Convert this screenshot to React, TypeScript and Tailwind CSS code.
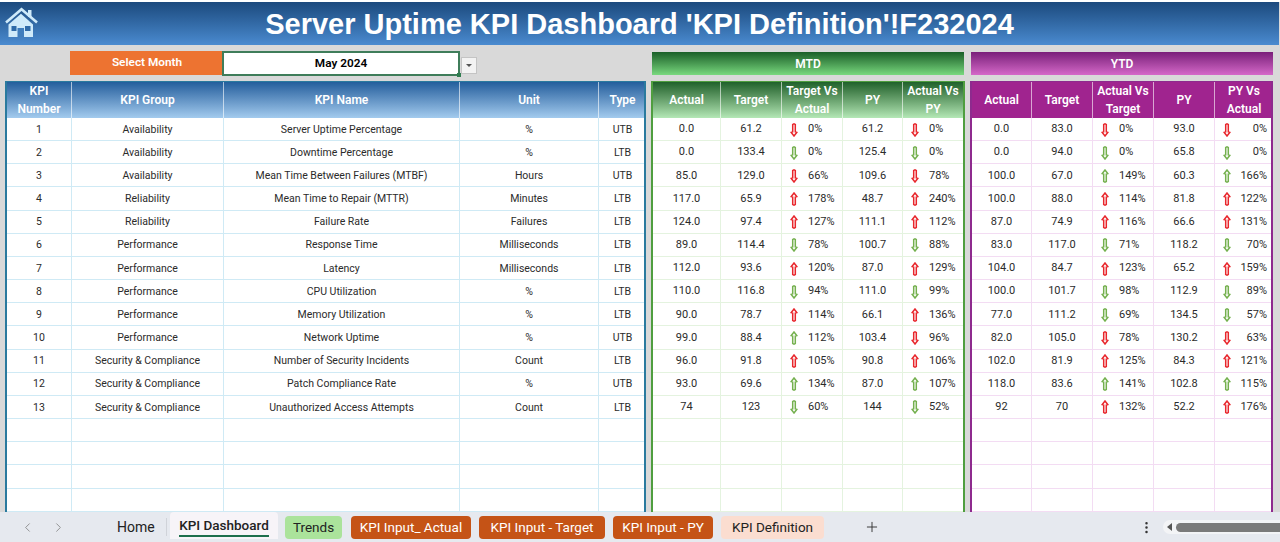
import { Plus, ChevronLeft, ChevronRight, EllipsisVertical } from "lucide-react";

type Arrow = "rd" | "gd" | "ru" | "gu";
type Row = {
  no: string;
  group: string;
  name: string;
  unit: string;
  type: string;
  mtd: string[];
  mtdArrows: [Arrow, Arrow];
  ytd: string[];
  ytdArrows: [Arrow, Arrow];
};

const rows: Row[] = [
  { no: "1", group: "Availability", name: "Server Uptime Percentage", unit: "%", type: "UTB", mtd: ["0.0", "61.2", "0%", "61.2", "0%"], mtdArrows: ["rd", "rd"], ytd: ["0.0", "83.0", "0%", "93.0", "0%"], ytdArrows: ["rd", "rd"] },
  { no: "2", group: "Availability", name: "Downtime Percentage", unit: "%", type: "LTB", mtd: ["0.0", "133.4", "0%", "125.4", "0%"], mtdArrows: ["gd", "gd"], ytd: ["0.0", "94.0", "0%", "65.8", "0%"], ytdArrows: ["gd", "gd"] },
  { no: "3", group: "Availability", name: "Mean Time Between Failures (MTBF)", unit: "Hours", type: "UTB", mtd: ["85.0", "129.0", "66%", "109.6", "78%"], mtdArrows: ["rd", "rd"], ytd: ["100.0", "67.0", "149%", "60.3", "166%"], ytdArrows: ["gu", "gu"] },
  { no: "4", group: "Reliability", name: "Mean Time to Repair (MTTR)", unit: "Minutes", type: "LTB", mtd: ["117.0", "65.9", "178%", "48.7", "240%"], mtdArrows: ["ru", "ru"], ytd: ["100.0", "88.0", "114%", "81.8", "122%"], ytdArrows: ["ru", "ru"] },
  { no: "5", group: "Reliability", name: "Failure Rate", unit: "Failures", type: "LTB", mtd: ["124.0", "97.4", "127%", "111.1", "112%"], mtdArrows: ["ru", "ru"], ytd: ["87.0", "74.9", "116%", "66.6", "131%"], ytdArrows: ["ru", "ru"] },
  { no: "6", group: "Performance", name: "Response Time", unit: "Milliseconds", type: "LTB", mtd: ["89.0", "114.4", "78%", "100.7", "88%"], mtdArrows: ["gd", "gd"], ytd: ["83.0", "117.0", "71%", "118.2", "70%"], ytdArrows: ["gd", "gd"] },
  { no: "7", group: "Performance", name: "Latency", unit: "Milliseconds", type: "LTB", mtd: ["112.0", "93.6", "120%", "87.0", "129%"], mtdArrows: ["ru", "ru"], ytd: ["104.0", "84.7", "123%", "65.2", "159%"], ytdArrows: ["ru", "ru"] },
  { no: "8", group: "Performance", name: "CPU Utilization", unit: "%", type: "LTB", mtd: ["110.0", "116.8", "94%", "111.0", "99%"], mtdArrows: ["gd", "gd"], ytd: ["100.0", "101.7", "98%", "112.9", "89%"], ytdArrows: ["gd", "gd"] },
  { no: "9", group: "Performance", name: "Memory Utilization", unit: "%", type: "LTB", mtd: ["90.0", "78.7", "114%", "66.1", "136%"], mtdArrows: ["ru", "ru"], ytd: ["77.0", "111.2", "69%", "134.5", "57%"], ytdArrows: ["gd", "gd"] },
  { no: "10", group: "Performance", name: "Network Uptime", unit: "%", type: "UTB", mtd: ["99.0", "88.4", "112%", "103.4", "96%"], mtdArrows: ["gu", "rd"], ytd: ["82.0", "105.0", "78%", "130.2", "63%"], ytdArrows: ["rd", "rd"] },
  { no: "11", group: "Security & Compliance", name: "Number of Security Incidents", unit: "Count", type: "LTB", mtd: ["96.0", "91.8", "105%", "90.8", "106%"], mtdArrows: ["ru", "ru"], ytd: ["102.0", "81.9", "125%", "84.3", "121%"], ytdArrows: ["ru", "ru"] },
  { no: "12", group: "Security & Compliance", name: "Patch Compliance Rate", unit: "%", type: "UTB", mtd: ["93.0", "69.6", "134%", "87.0", "107%"], mtdArrows: ["gu", "gu"], ytd: ["118.0", "83.6", "141%", "102.8", "115%"], ytdArrows: ["gu", "gu"] },
  { no: "13", group: "Security & Compliance", name: "Unauthorized Access Attempts", unit: "Count", type: "LTB", mtd: ["74", "123", "60%", "144", "52%"], mtdArrows: ["gd", "gd"], ytd: ["92", "70", "132%", "52.2", "176%"], ytdArrows: ["ru", "ru"] },
];

// padded to the rows that are visible above the sheet tabs
const emptyRows = [0, 1, 2, 3, 4];

function HollowArrow({ kind }: { kind: Arrow }) {
  const color = kind[0] === "r" ? "#e8262c" : "#74b04e";
  const up = kind[1] === "u";
  return (
    <svg width="8" height="14" viewBox="0 0 8 14" className="shrink-0">
      <g transform={up ? "rotate(180 4 7)" : undefined} fill="none" stroke={color} strokeWidth="1.5">
        <path d="M2.700 1v8.500M5.300 1v8.500M2.700 1h2.600M.7 8.700 4 13l3.300-4.300" />
      </g>
    </svg>
  );
}

function HomeIcon() {
  return (
    <svg width="36" height="32" viewBox="0 0 36 32" className="ml-[4px] mt-[5px] shrink-0">
      <path d="M2 15.500 17.500 2.300 33 15.500" fill="none" stroke="#cfeafa" strokeWidth="2.600" />
      <rect x="24" y="3" width="3.500" height="7" fill="#cfeafa" />
      <path d="M4.500 17.500 17 6.800 29 17.500V30H4.500z" fill="#cfeafa" />
      <rect x="7.500" y="19" width="5" height="5" fill="#2f6aa8" />
      <rect x="21" y="19" width="5.500" height="5" fill="#2f6aa8" />
      <rect x="13.500" y="21" width="6.500" height="9" fill="#3f7dbd" />
    </svg>
  );
}

function Dropdown() {
  return (
    <div className="w-[16px] h-[17px] ml-[1px] mt-[6px] bg-[#f3f3f3] border border-[#c4c4c4] flex items-center justify-center">
      <div className="w-0 h-0 border-x-[3px] border-x-transparent border-t-[3px] border-t-[#555]" />
    </div>
  );
}

function Cell({ w, children, line }: { w: string; children?: React.ReactNode; line: string }) {
  return <div className={`${w} ${line} shrink-0 flex items-center justify-center pt-[1px] border-r last:border-r-0`}>{children}</div>;
}

function PctCell({ kind, value, w, line, right }: { kind: Arrow; value: string; w: string; line: string; right?: boolean }) {
  return (
    <div className={`${w} ${line} shrink-0 flex items-center pt-[1px] border-r last:border-r-0 pl-[8px] ${right ? "justify-between pr-[6px]" : "gap-[10px]"}`}>
      <HollowArrow kind={kind} />
      <span>{value}</span>
    </div>
  );
}

const kpiWidths = ["w-[65px]", "w-[152px]", "w-[236px]", "w-[139px]", "w-[47px]"];
const mtdWidths = ["w-[68px]", "w-[61px]", "w-[61px]", "w-[60px]", "w-[60px]"];
const ytdWidths = ["w-[60px]", "w-[61px]", "w-[61px]", "w-[61px]", "w-[58px]"];

function HeaderRow({ labels, widths, className }: { labels: string[]; widths: string[]; className: string }) {
  return (
    <div className={`flex h-[37px] shrink-0 -mt-px text-white font-semibold text-[12px] leading-[18px] ${className}`}>
      {labels.map((label, i) => (
        <div key={label + i} className={`${widths[i]} shrink-0 flex items-center justify-center text-center border-r border-white/60 last:border-r-0 whitespace-pre-line`}>
          {label}
        </div>
      ))}
    </div>
  );
}

export default function App() {
  return (
    <div className="relative w-[1280px] h-[542px] overflow-hidden bg-[#d9d9d9] text-[#2b2b2b] text-[11px] font-['Roboto','Noto_Sans',sans-serif]">
      <div className="h-[2px] bg-white" />
      {/* title bar */}
      <div className="flex h-[43px] mr-[1px] bg-gradient-to-b from-[#1c4a7e] to-[#4a8bd0]">
        <HomeIcon />
        <div className="flex-1 text-center text-white font-bold text-[29px] leading-[44px] font-['Liberation_Sans',sans-serif] pr-[40px]">
          Server Uptime KPI Dashboard 'KPI Definition'!F232024
        </div>
      </div>

      {/* selector row */}
      <div className="flex h-[36px] pt-[6px]">
        <div className="ml-[70px] w-[152px] h-[24px] pl-[2px] bg-[#ed7331] text-white font-semibold text-[11.8px] flex items-center justify-center">
          Select Month
        </div>
        <div className="relative w-[238px] h-[25px] bg-white border-2 border-[#3f7d5a] text-black font-semibold text-[11.8px] flex items-center justify-center">
          May 2024
          <div className="absolute -right-[3px] -bottom-[3px] w-[4px] h-[4px] bg-[#2f7d4f]" />
        </div>
        <Dropdown />
        <div className="ml-[175px] w-[312px] h-[23px] mt-[1px] bg-gradient-to-b from-[#1a6029] to-[#79d97f] text-white font-semibold text-[12px] flex items-center justify-center">
          MTD
        </div>
        <div className="ml-[7px] w-[302px] h-[23px] mt-[1px] bg-gradient-to-b from-[#7a1f7a] to-[#d568c8] text-white font-semibold text-[12px] flex items-center justify-center">
          YTD
        </div>
      </div>

      {/* tables */}
      <div className="flex h-[431px] ml-[5px] gap-[5px]">
        <div className="w-[641px] h-full flex flex-col bg-white border-x-2 border-t border-[#2a7a9e] overflow-hidden shrink-0 text-[10.5px]">
          <HeaderRow
            labels={["KPI\nNumber", "KPI Group", "KPI Name", "Unit", "Type"]}
            widths={kpiWidths}
            className="bg-gradient-to-b from-[#1f5c9a] to-[#a3cbee]"
          />
          {rows.map((r) => (
            <div key={r.no} className="flex h-[23.17px] shrink-0 border-b border-[#cfeaf5]">
              <Cell w={kpiWidths[0]} line="border-[#cfeaf5]">{r.no}</Cell>
              <Cell w={kpiWidths[1]} line="border-[#cfeaf5]">{r.group}</Cell>
              <Cell w={kpiWidths[2]} line="border-[#cfeaf5]">{r.name}</Cell>
              <Cell w={kpiWidths[3]} line="border-[#cfeaf5]">{r.unit}</Cell>
              <Cell w={kpiWidths[4]} line="border-[#cfeaf5]">{r.type}</Cell>
            </div>
          ))}
          {emptyRows.map((n) => (
            <div key={n} className="flex h-[23.17px] shrink-0 border-b border-[#cfeaf5]">
              {kpiWidths.map((w) => (
                <Cell key={w} w={w} line="border-[#cfeaf5]" />
              ))}
            </div>
          ))}
        </div>

        <div className="w-[314px] h-full flex flex-col bg-white border-x-2 border-t border-[#4f9e3f] overflow-hidden shrink-0">
          <HeaderRow
            labels={["Actual", "Target", "Target Vs\nActual", "PY", "Actual Vs\nPY"]}
            widths={mtdWidths}
            className="bg-gradient-to-b from-[#1a5e28] to-[#b4e8b6]"
          />
          {rows.map((r) => (
            <div key={r.no} className="flex h-[23.17px] shrink-0 border-b border-[#e4f3df]">
              <Cell w={mtdWidths[0]} line="border-[#e4f3df]">{r.mtd[0]}</Cell>
              <Cell w={mtdWidths[1]} line="border-[#e4f3df]">{r.mtd[1]}</Cell>
              <PctCell w={mtdWidths[2]} line="border-[#e4f3df]" kind={r.mtdArrows[0]} value={r.mtd[2]} />
              <Cell w={mtdWidths[3]} line="border-[#e4f3df]">{r.mtd[3]}</Cell>
              <PctCell w={mtdWidths[4]} line="border-[#e4f3df]" kind={r.mtdArrows[1]} value={r.mtd[4]} />
            </div>
          ))}
          {emptyRows.map((n) => (
            <div key={n} className="flex h-[23.17px] shrink-0 border-b border-[#e4f3df]">
              {mtdWidths.map((w, i) => (
                <Cell key={i} w={w} line="border-[#e4f3df]" />
              ))}
            </div>
          ))}
        </div>

        <div className="w-[303px] h-full flex flex-col bg-white border-x-2 border-t border-[#8e2a8e] overflow-hidden shrink-0">
          <HeaderRow
            labels={["Actual", "Target", "Actual Vs\nTarget", "PY", "PY Vs\nActual"]}
            widths={ytdWidths}
            className="bg-[#a0248f]"
          />
          {rows.map((r) => (
            <div key={r.no} className="flex h-[23.17px] shrink-0 border-b border-[#f3dcf3]">
              <Cell w={ytdWidths[0]} line="border-[#f3dcf3]">{r.ytd[0]}</Cell>
              <Cell w={ytdWidths[1]} line="border-[#f3dcf3]">{r.ytd[1]}</Cell>
              <PctCell w={ytdWidths[2]} line="border-[#f3dcf3]" kind={r.ytdArrows[0]} value={r.ytd[2]} />
              <Cell w={ytdWidths[3]} line="border-[#f3dcf3]">{r.ytd[3]}</Cell>
              <PctCell w={ytdWidths[4]} line="border-[#f3dcf3]" kind={r.ytdArrows[1]} value={r.ytd[4]} right />
            </div>
          ))}
          {emptyRows.map((n) => (
            <div key={n} className="flex h-[23.17px] shrink-0 border-b border-[#f3dcf3]">
              {ytdWidths.map((w, i) => (
                <Cell key={i} w={w} line="border-[#f3dcf3]" />
              ))}
            </div>
          ))}
        </div>
      </div>

      {/* sheet tabs */}
      <div className="absolute left-0 right-0 bottom-0 h-[30px] bg-[#e6e9ef] flex items-center text-[13.5px] text-[#222] font-['Roboto',sans-serif]">
        <ChevronLeft size={15} strokeWidth={1.2} className="ml-[20px] text-[#777]" />
        <ChevronRight size={15} strokeWidth={1.2} className="ml-[16px] text-[#777]" />
        <span className="ml-[51px] w-[38px] mt-[1px] text-[14px]">Home</span>
        <div className="ml-[11px] w-px h-[18px] bg-[#d0d3d9]" />
        <div className="ml-[3px] h-[27px] w-[108px] bg-[#f7f4f8] rounded-t-[4px] flex flex-col items-center justify-center self-start">
          <span className="leading-[20px] font-medium">KPI Dashboard</span>
          <div className="w-[90px] h-[2px] bg-[#1d6f4c]" />
        </div>
        <div className="ml-[7px] mt-[1px] h-[23px] w-[57px] rounded-[4px] bg-[#abe39b] flex items-center justify-center">Trends</div>
        <div className="ml-[9px] mt-[1px] h-[23px] w-[120px] rounded-[4px] bg-[#c55316] text-white flex items-center justify-center">KPI Input_ Actual</div>
        <div className="ml-[8px] mt-[1px] h-[23px] w-[126px] rounded-[4px] bg-[#c55316] text-white flex items-center justify-center">KPI Input - Target</div>
        <div className="ml-[8px] mt-[1px] h-[23px] w-[100px] rounded-[4px] bg-[#c55316] text-white flex items-center justify-center">KPI Input - PY</div>
        <div className="ml-[8px] mt-[1px] h-[23px] w-[103px] rounded-[4px] bg-[#fbddd0] flex items-center justify-center">KPI Definition</div>
        <Plus size={16} strokeWidth={1.4} className="ml-[40px] text-[#333]" />
        <EllipsisVertical size={15} strokeWidth={2} className="ml-[259px] text-[#333]" />
        <div className="ml-[9px] flex-1 h-[14px] rounded-l-full bg-[#f3f4f6] flex items-center pl-[4px]">
          <div className="w-0 h-0 border-y-[4px] border-y-transparent border-r-[5px] border-r-[#555]" />
          <div className="ml-[4px] flex-1 h-[9px] rounded-l-full bg-[#7a7a7a]" />
        </div>
      </div>
    </div>
  );
}
